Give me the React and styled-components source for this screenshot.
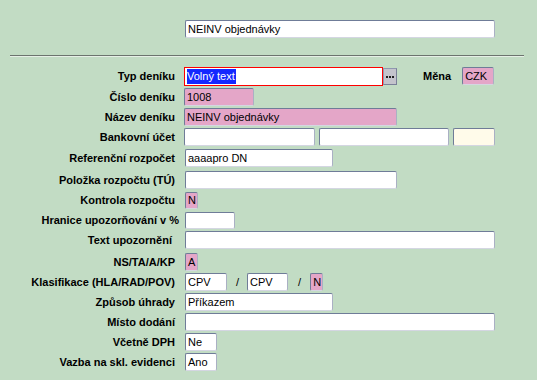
import React from "react";
import styled, { createGlobalStyle } from "styled-components";

const Global = createGlobalStyle`
  html, body { margin: 0; padding: 0; }
  body {
    background: #c2dcc4;
    font-family: "Liberation Sans", Arial, sans-serif;
    font-size: 11px;
    color: #000;
  }
`;

const Page = styled.div`
  width: 537px;
  height: 380px;
  overflow: hidden;
  background: #c2dcc4;
`;

const Header = styled.div`
  display: flex;
  padding: 20px 0 0 185px;
  height: 55px;
  box-sizing: border-box;
`;

const Divider = styled.div`
  margin: 0 13px 0 10px;
  border-top: 1px solid #6c746e;
  border-bottom: 1px solid #e6f0e6;
`;

const Form = styled.div`
  display: flex;
  flex-direction: column;
  padding-top: 10px;
`;

const Row = styled.div`
  display: flex;
  align-items: flex-start;
  height: ${(p) => p.$h || 20}px;
`;

const Label = styled.div`
  width: ${(p) => (p.$over ? 179 : 175)}px;
  margin-right: ${(p) => (p.$over ? -4 : 0)}px;
  flex: none;
  text-align: right;
  white-space: pre;
  font-weight: bold;
  font-size: 11px;
  line-height: ${(p) => p.$lh || 18}px;
`;

const Fields = styled.div`
  display: flex;
  align-items: flex-start;
  margin-left: ${(p) => (p.$tight ? 9 : 10)}px;
`;

const bg = {
  white: "#ffffff",
  pink: "#e4a6c8",
  cream: "#fffbea",
};

const Field = styled.div`
  box-sizing: border-box;
  width: ${(p) => p.$w}px;
  height: ${(p) => p.$hh || 18}px;
  margin-left: ${(p) => p.$ml || 0}px;
  background: ${(p) => bg[p.$tone || "white"]};
  border: 1px solid;
  border-color: #6f7c98 #aab0c4 #d4d6e2 #6f7c98;
  border-radius: 2px;
  padding-left: 2px;
  font-size: 11px;
  line-height: ${(p) => (p.$hh || 18) - 2}px;
  white-space: nowrap;
  overflow: hidden;
`;

const ActiveField = styled(Field)`
  border: 1px solid #ff0000;
  border-radius: 0;
  height: 19px;
  padding-left: 2px;
  padding-top: 1px;
  line-height: 15px;
`;

const Selected = styled.span`
  background: #1428ff;
  color: #fff;
  display: inline-block;
  padding-right: 1px;
`;

const DotsButton = styled.div`
  box-sizing: border-box;
  width: 14px;
  height: 17px;
  margin-top: 1px;
  background: #c4c4cc;
  border: 1px solid;
  border-color: #9098b0 #7a8098 #7a8098 #9098b0;
  display: flex;
  align-items: center;
  justify-content: center;
  gap: 1px;
`;

const Dot = styled.span`
  width: 2px;
  height: 2px;
  background: #202020;
`;

const InlineLabel = styled.div`
  font-weight: bold;
  font-size: 11px;
  line-height: 18px;
  margin-left: ${(p) => p.$ml || 0}px;
`;

const Slash = styled.div`
  font-size: 11px;
  line-height: 18px;
  margin-left: ${(p) => p.$ml || 0}px;
`;

export default function App() {
  return (
    <Page>
      <Global />
      <Header>
        <Field $w={310}>NEINV objednávky</Field>
      </Header>
      <Divider />
      <Form>
        <Row $h={21}>
          <Label $lh={19}>Typ deníku</Label>
          <Fields $tight>
            <ActiveField $w={199}>
              <Selected>Volný text</Selected>
            </ActiveField>
            <DotsButton>
              <Dot />
              <Dot />
              <Dot />
            </DotsButton>
            <InlineLabel $ml={26}>Měna</InlineLabel>
            <Field $w={32} $ml={11} $tone="pink">
              CZK
            </Field>
          </Fields>
        </Row>
        <Row $h={20}>
          <Label>Číslo deníku</Label>
          <Fields $tight>
            <Field $w={70} $tone="pink">
              1008
            </Field>
          </Fields>
        </Row>
        <Row $h={20}>
          <Label>Název deníku</Label>
          <Fields $tight>
            <Field $w={213} $tone="pink">
              NEINV objednávky
            </Field>
          </Fields>
        </Row>
        <Row $h={21}>
          <Label>Bankovní účet</Label>
          <Fields $tight>
            <Field $w={131} />
            <Field $w={130} $ml={4} />
            <Field $w={42} $ml={4} $tone="cream" />
          </Fields>
        </Row>
        <Row $h={22}>
          <Label>Referenční rozpočet</Label>
          <Fields>
            <Field $w={148}>aaaapro DN</Field>
          </Fields>
        </Row>
        <Row $h={21}>
          <Label>Položka rozpočtu (TÚ)</Label>
          <Fields>
            <Field $w={212} />
          </Fields>
        </Row>
        <Row $h={20}>
          <Label $lh={17}>Kontrola rozpočtu</Label>
          <Fields>
            <Field $w={13} $hh={17} $tone="pink">
              N
            </Field>
          </Fields>
        </Row>
        <Row $h={19}>
          <Label $over $lh={17}>Hranice upozorňování v %</Label>
          <Fields>
            <Field $w={50} $hh={17} />
          </Fields>
        </Row>
        <Row $h={22}>
          <Label>{"Text upozornění "}</Label>
          <Fields>
            <Field $w={310} />
          </Fields>
        </Row>
        <Row $h={20}>
          <Label>NS/TA/A/KP</Label>
          <Fields>
            <Field $w={13} $tone="pink">
              A
            </Field>
          </Fields>
        </Row>
        <Row $h={20}>
          <Label>Klasifikace (HLA/RAD/POV)</Label>
          <Fields>
            <Field $w={42}>CPV</Field>
            <Slash $ml={9}>/</Slash>
            <Field $w={41} $ml={8}>CPV</Field>
            <Slash $ml={10}>/</Slash>
            <Field $w={13} $ml={9} $tone="pink">
              N
            </Field>
          </Fields>
        </Row>
        <Row $h={20}>
          <Label>Způsob úhrady</Label>
          <Fields>
            <Field $w={148}>Příkazem</Field>
          </Fields>
        </Row>
        <Row $h={20}>
          <Label>Místo dodání</Label>
          <Fields>
            <Field $w={310} />
          </Fields>
        </Row>
        <Row $h={20}>
          <Label>Včetně DPH</Label>
          <Fields>
            <Field $w={32}>Ne</Field>
          </Fields>
        </Row>
        <Row $h={20}>
          <Label>Vazba na skl. evidenci</Label>
          <Fields>
            <Field $w={32}>Ano</Field>
          </Fields>
        </Row>
      </Form>
    </Page>
  );
}
